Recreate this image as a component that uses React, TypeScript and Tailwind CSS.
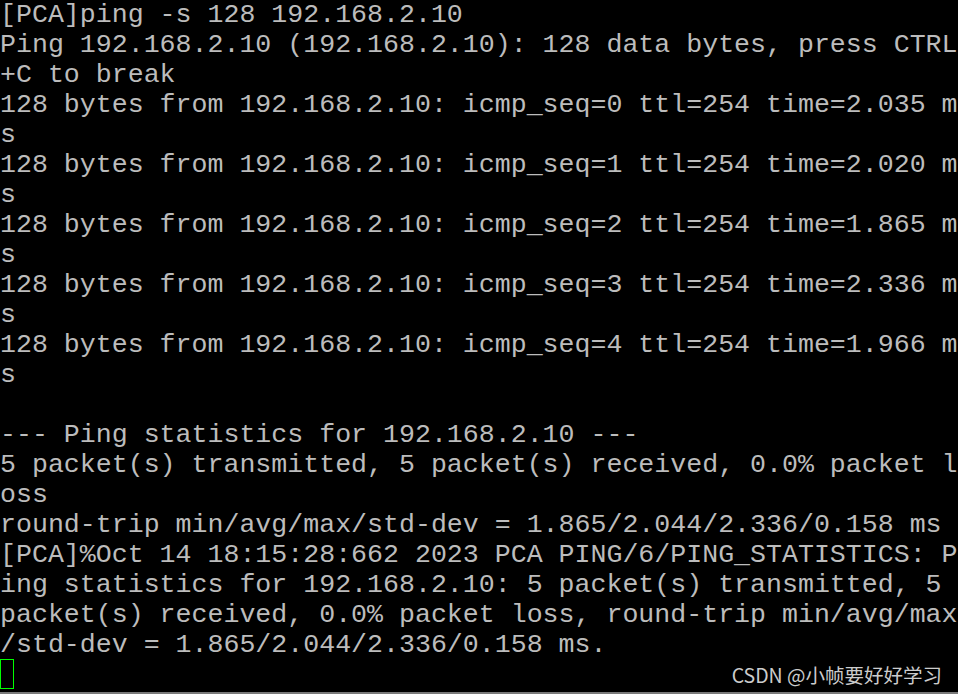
const lines = [
  "[PCA]ping -s 128 192.168.2.10",
  "Ping 192.168.2.10 (192.168.2.10): 128 data bytes, press CTRL",
  "+C to break",
  "128 bytes from 192.168.2.10: icmp_seq=0 ttl=254 time=2.035 m",
  "s",
  "128 bytes from 192.168.2.10: icmp_seq=1 ttl=254 time=2.020 m",
  "s",
  "128 bytes from 192.168.2.10: icmp_seq=2 ttl=254 time=1.865 m",
  "s",
  "128 bytes from 192.168.2.10: icmp_seq=3 ttl=254 time=2.336 m",
  "s",
  "128 bytes from 192.168.2.10: icmp_seq=4 ttl=254 time=1.966 m",
  "s",
  "",
  "--- Ping statistics for 192.168.2.10 ---",
  "5 packet(s) transmitted, 5 packet(s) received, 0.0% packet l",
  "oss",
  "round-trip min/avg/max/std-dev = 1.865/2.044/2.336/0.158 ms",
  "[PCA]%Oct 14 18:15:28:662 2023 PCA PING/6/PING_STATISTICS: P",
  "ing statistics for 192.168.2.10: 5 packet(s) transmitted, 5",
  "packet(s) received, 0.0% packet loss, round-trip min/avg/max",
  "/std-dev = 1.865/2.044/2.336/0.158 ms.",
];

export default function App() {
  return (
    <div className="w-[958px] h-[694px] bg-black overflow-hidden flex flex-col">
      <div className="relative flex-1 font-['Liberation_Mono','Courier_New',monospace] text-[26.6px] leading-[30px] text-[#bcbcbc]">
        {lines.map((line, i) => (
          <div key={i} className="h-[30px] whitespace-pre">
            {line}
          </div>
        ))}
        <div className="h-[30px]">
          <span className="block w-[14px] h-[30px] -mt-px border border-[#00ff00]" />
        </div>
        <span className="absolute right-[16px] bottom-[8px] font-['Noto_Sans_CJK_SC',sans-serif] text-[19.5px] leading-none text-[#cccccc]">
          CSDN @小帧要好好学习
        </span>
      </div>
      <div className="h-[2px] bg-[#7a7a7a]" />
    </div>
  );
}
